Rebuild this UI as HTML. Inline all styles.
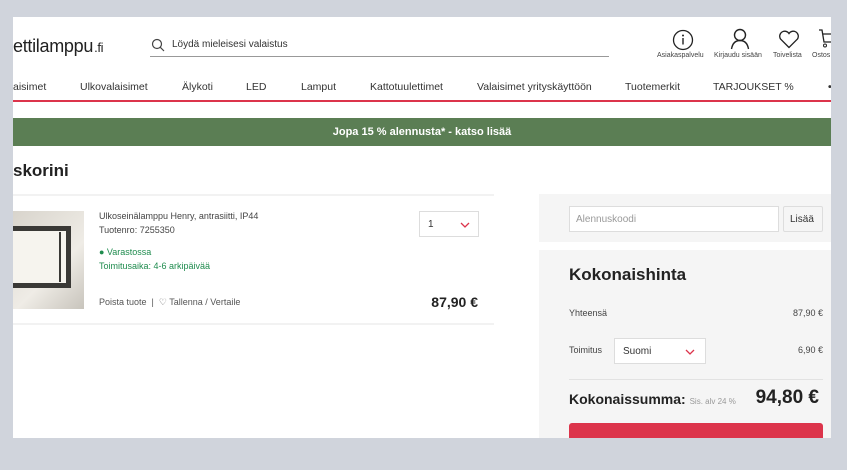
<!DOCTYPE html>
<html><head><meta charset="utf-8"><style>
*{margin:0;padding:0;box-sizing:border-box}
body{width:847px;height:470px;background:#d0d4dc;font-family:"Liberation Sans",sans-serif;color:#333;position:relative;overflow:hidden}
.p{position:absolute;left:13px;top:17px;width:818px;height:421px;background:#fff;overflow:hidden}
.a{position:absolute;white-space:nowrap}
</style></head><body>
<div class="p">
<div class="a" style="left:0;top:19px;font-size:18px;color:#222;letter-spacing:-0.3px">ettilamppu<span style="font-size:13px;margin-left:1px">.fi</span></div>
<svg class="a" style="left:138px;top:21px" width="14" height="14" viewBox="0 0 14 14"><circle cx="6" cy="6" r="4.5" fill="none" stroke="#444" stroke-width="1.2"/><line x1="9.3" y1="9.3" x2="13" y2="13" stroke="#444" stroke-width="1.2"/></svg>
<div class="a" style="left:159px;top:22px;font-size:10px;color:#333">Löydä mieleisesi valaistus</div>
<div class="a" style="left:137px;top:39px;width:459px;height:1px;background:#999"></div>
<svg class="a" style="left:659px;top:12px" width="22" height="22" viewBox="0 0 22 22"><circle cx="11" cy="11" r="9.5" fill="none" stroke="#222" stroke-width="1.3"/><circle cx="11" cy="6.5" r="1" fill="#222"/><line x1="11" y1="9" x2="11" y2="15.5" stroke="#222" stroke-width="1.4"/></svg>
<svg class="a" style="left:717px;top:11px" width="20" height="22" viewBox="0 0 20 22"><circle cx="10" cy="7" r="5.5" fill="none" stroke="#222" stroke-width="1.4"/><path d="M1.5 21 Q3 12.5 10 12.5 Q17 12.5 18.5 21" fill="none" stroke="#222" stroke-width="1.4"/></svg>
<svg class="a" style="left:765px;top:13px" width="22" height="19" viewBox="0 0 22 19"><path d="M11 17.5 L2.5 9 A4.8 4.8 0 0 1 11 3.5 A4.8 4.8 0 0 1 19.5 9 Z" fill="none" stroke="#222" stroke-width="1.3"/></svg>
<svg class="a" style="left:805px;top:11px" width="14" height="22" viewBox="0 0 14 22"><path d="M1 2 H4 L6 14 H14 M5 6 H14" fill="none" stroke="#222" stroke-width="1.3"/><circle cx="7" cy="17.5" r="1.5" fill="none" stroke="#222"/></svg>
<div class="a" style="left:644px;top:35px;font-size:7px;color:#444">Asiakaspalvelu</div>
<div class="a" style="left:701px;top:35px;font-size:7px;color:#444">Kirjaudu sisään</div>
<div class="a" style="left:760px;top:35px;font-size:7px;color:#444">Toivelista</div>
<div class="a" style="left:799px;top:35px;font-size:7px;color:#444">Ostos</div>
<div class="a" style="top:64px;left:0;font-size:10.5px;color:#333;width:818px">
<span class="a" style="left:0">aisimet</span><span class="a" style="left:67px">Ulkovalaisimet</span><span class="a" style="left:169px">Älykoti</span><span class="a" style="left:233px">LED</span><span class="a" style="left:288px">Lamput</span><span class="a" style="left:357px">Kattotuulettimet</span><span class="a" style="left:464px">Valaisimet yrityskäyttöön</span><span class="a" style="left:612px">Tuotemerkit</span><span class="a" style="left:700px">TARJOUKSET %</span><span class="a" style="left:815px;font-weight:bold">•</span></div>
<div class="a" style="left:0;top:83px;width:818px;height:2px;background:#dc344b"></div>
<div class="a" style="left:0;top:101px;width:818px;height:28px;background:#5b7e54;color:#fff;font-weight:bold;font-size:11px;text-align:center;line-height:28px">Jopa 15 % alennusta* - katso lisää</div>
<div class="a" style="left:0;top:144px;font-size:17px;font-weight:bold;color:#222">skorini</div>
<div class="a" style="left:0;top:177px;width:481px;height:2px;background:#f2f2f2"></div>
<div class="a" style="left:0;top:306px;width:481px;height:2px;background:#f2f2f2"></div>
<div class="a" style="left:0;top:194px;width:71px;height:98px;background:linear-gradient(135deg,#d8d4cc,#efece6 60%,#c8c4bc)"><div style="position:absolute;left:-10px;top:15px;width:68px;height:62px;border:5px solid #3a3936;background:#f6f4ee"></div><div style="position:absolute;left:46px;top:21px;width:2px;height:50px;background:#3a3936"></div></div>
<div class="a" style="left:86px;top:194px;font-size:9px;color:#444">Ulkoseinälamppu Henry, antrasiitti, IP44</div>
<div class="a" style="left:86px;top:208px;font-size:9px;color:#444">Tuotenro: 7255350</div>
<div class="a" style="left:86px;top:230px;font-size:9px;color:#1f8c4e">● Varastossa</div>
<div class="a" style="left:86px;top:244px;font-size:9px;color:#1f8c4e">Toimitusaika: 4-6 arkipäivää</div>
<div class="a" style="left:86px;top:280px;font-size:9px;color:#555">Poista tuote &nbsp;| &nbsp;♡ Tallenna / Vertaile</div>
<div class="a" style="left:406px;top:194px;width:60px;height:26px;border:1px solid #ddd;font-size:10px;padding:7px 8px">1<svg style="position:absolute;right:8px;top:10px" width="10" height="6"><path d="M1 1 L5 5 L9 1" fill="none" stroke="#dc344b" stroke-width="1.3"/></svg></div>
<div class="a" style="right:353px;top:277px;font-size:14px;font-weight:bold;color:#222">87,90 €</div>
<div class="a" style="left:526px;top:177px;width:292px;height:48px;background:#f5f5f5"></div>
<div class="a" style="left:556px;top:189px;width:210px;height:26px;border:1px solid #ddd;background:#fff;font-size:10px;color:#999;padding:7px 6px">Alennuskoodi</div>
<div class="a" style="left:770px;top:189px;width:40px;height:26px;border:1px solid #ddd;border-radius:2px;background:#f5f5f5;font-size:10px;padding:7px 6px">Lisää</div>
<div class="a" style="left:526px;top:233px;width:292px;height:200px;background:#f5f5f5"></div>
<div class="a" style="left:556px;top:248px;font-size:17px;font-weight:bold;color:#222">Kokonaishinta</div>
<div class="a" style="left:556px;top:291px;font-size:9px;color:#444">Yhteensä</div>
<div class="a" style="right:8px;top:291px;font-size:9px;color:#444">87,90 €</div>
<div class="a" style="left:556px;top:328px;font-size:9px;color:#444">Toimitus</div>
<div class="a" style="left:601px;top:321px;width:92px;height:26px;background:#fff;border:1px solid #ddd;font-size:10px;padding:7px 8px">Suomi<svg style="position:absolute;right:10px;top:10px" width="10" height="6"><path d="M1 1 L5 5 L9 1" fill="none" stroke="#dc344b" stroke-width="1.3"/></svg></div>
<div class="a" style="right:8px;top:328px;font-size:9px;color:#444">6,90 €</div>
<div class="a" style="left:556px;top:362px;width:254px;height:1px;background:#e2e2e2"></div>
<div class="a" style="left:556px;top:374px;font-size:14px;font-weight:bold;color:#222">Kokonaissumma: <span style="font-size:8px;font-weight:normal;color:#999">Sis. alv 24 %</span></div>
<div class="a" style="right:12px;top:370px;font-size:19px;font-weight:bold;color:#222">94,80 €</div>
<div class="a" style="left:556px;top:406px;width:254px;height:30px;background:#dc344b;border-radius:3px"></div>
</div>
</body></html>
